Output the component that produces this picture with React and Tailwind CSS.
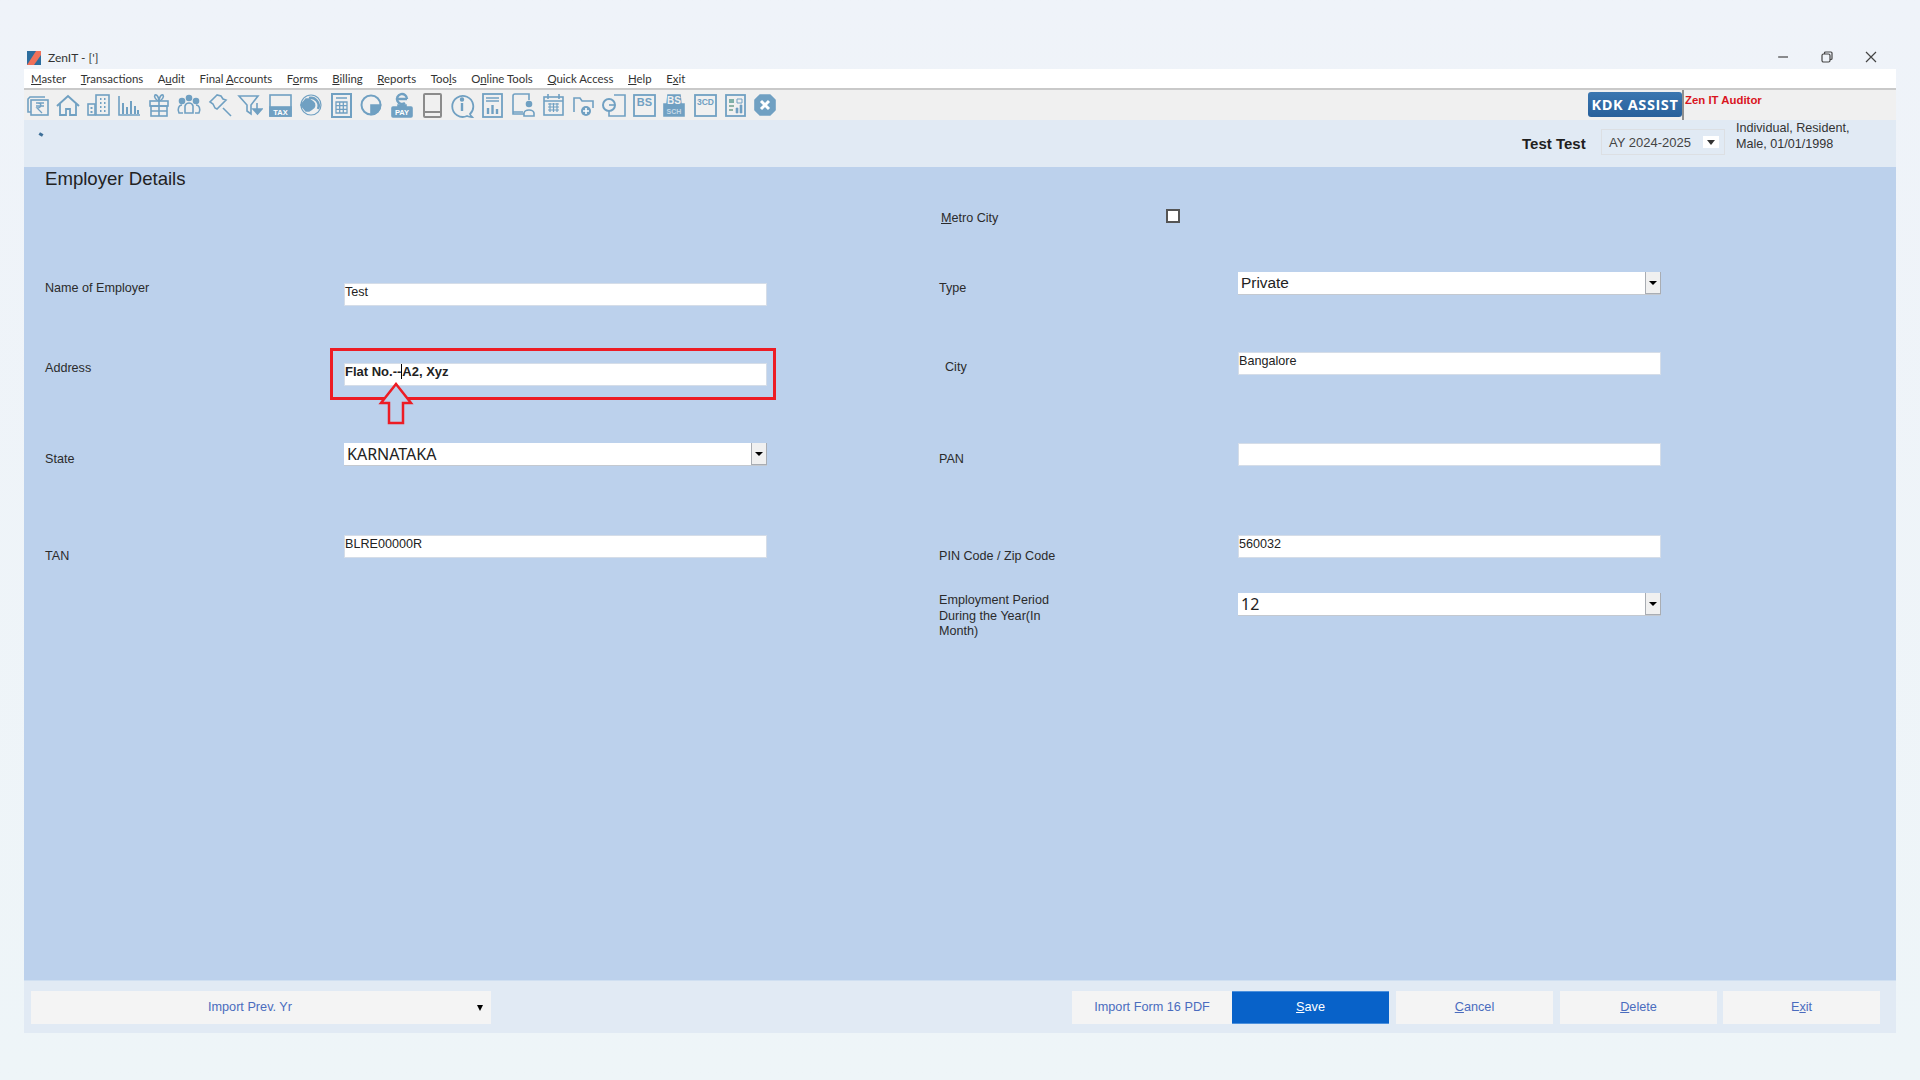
const MENU = [
  ['', 'M', 'aster'],
  ['', 'T', 'ransactions'],
  ['A', 'u', 'dit'],
  ['Final ', 'A', 'ccounts'],
  ['F', 'o', 'rms'],
  ['', 'B', 'illing'],
  ['', 'R', 'eports'],
  ['Too', 'l', 's'],
  ['O', 'n', 'line Tools'],
  ['', 'Q', 'uick Access'],
  ['', 'H', 'elp'],
  ['E', 'x', 'it'],
];

const Svg = ({ children, className = 'text-[#70a0c2]' }) => (
  <svg viewBox="0 0 26 26" width="26" height="26" fill="none" stroke="currentColor" strokeWidth="1.6" className={`shrink-0 ${className}`}>
    {children}
  </svg>
);

const Tiny = ({ x, y, size = 7, children, fill = '#fff' }) => (
  <text x={x} y={y} fontSize={size} fontWeight="700" textAnchor="middle" fill={fill} stroke="none" fontFamily="Liberation Sans, sans-serif">{children}</text>
);

// toolbar icons, left to right
const ICONS = [
  <Svg key="a"><path d="M20 5H5l-2 2v13h3" /><rect x="6" y="8" width="17" height="15" /><path d="M11 11h8M11 14h8M13 11c4 0 4 5-1 5l5 5" strokeWidth="1.3" /></Svg>,
  <Svg key="b"><path d="M2 14 13 4l11 10" strokeWidth="2" /><path d="M5 12v11h6v-6h4v6h6V12" strokeWidth="1.8" /></Svg>,
  <Svg key="c"><rect x="2" y="12" width="7" height="11" /><rect x="10" y="3" width="13" height="20" /><path d="M14 7h1.5M18 7h1.5M14 11h1.5M18 11h1.5M14 15h1.5M18 15h1.5M14 19h1.5M18 19h1.5M4.500 16h2M4.500 20h2" strokeWidth="2" /></Svg>,
  <Svg key="d"><path d="M3 4v19h21" /><path d="M7 11v11M11 15v7M15 9v13M19 14v8M22 18v4" strokeWidth="2" /></Svg>,
  <Svg key="e"><rect x="4" y="9" width="18" height="5" /><rect x="5" y="14" width="16" height="10" /><path d="M13 9v15M5 19h16" /><path d="M13 9C9 8 8 4 9 3c2-1 4 3 4 6 0-3 2-7 4-6 1 1 0 5-4 6Z" /></Svg>,
  <Svg key="f"><circle cx="13" cy="6" r="2.500" fill="currentColor" /><circle cx="6" cy="9" r="2.500" fill="currentColor" /><circle cx="20" cy="9" r="2.500" fill="currentColor" /><path d="M9 21v-7c1-4 7-4 8 0v7Z" /><path d="M7 21H3c-2-4 0-8 3-8M19 21h4c2-4 0-8-3-8" /></Svg>,
  <Svg key="g"><path d="m10 3-7 7 3 2 2 4 2 1 9-9-3-1-2-3Z" /><path d="m16 16 8 8" /></Svg>,
  <Svg key="h"><path d="M2 4h19l-7 9v9l-4-3v-6Z" /><path d="M20 11v7M16 17h9l-4.500 5Z" fill="currentColor" /></Svg>,
  <Svg key="i"><rect x="3" y="3" width="21" height="21" /><rect x="3" y="15" width="21" height="9" fill="currentColor" /><Tiny x="13.500" y="22.500" size="7.500">TAX</Tiny></Svg>,
  <Svg key="j"><circle cx="13" cy="13" r="10" strokeWidth="1.2" /><path d="M3 13l5-6h3l4 3a4 4 0 0 1-1 7l-3 2H8Z" fill="currentColor" /><path d="M11 6a8 8 0 0 1 9 11" strokeWidth="2.500" /></Svg>,
  <Svg key="k"><rect x="4" y="2" width="19" height="23" strokeWidth="2" /><path d="M8 6h11M8 10h11v11H8ZM11.700 10v11M15.300 10v11M8 13.700h11M8 17.300h11" strokeWidth="1.300" /></Svg>,
  <Svg key="l"><circle cx="13" cy="13" r="9.500" strokeWidth="2" /><path d="M13 13h9.500a9.500 9.500 0 0 1-9.500 9.500Z" fill="currentColor" /></Svg>,
  <Svg key="m"><path d="M8 7h10M18 7a5 5 0 1 0-2 4" strokeWidth="2.500" /><path d="M9 13h8v2H9Z" fill="currentColor" /><rect x="3" y="15" width="20" height="10" rx="1" fill="currentColor" /><Tiny x="13" y="23" size="7.500">PAY</Tiny></Svg>,
  <Svg key="n" className="text-[#8b8b8b]"><rect x="5" y="2" width="17" height="23" rx="1" strokeWidth="2" /><path d="M5 20h17" strokeWidth="2" /></Svg>,
  <Svg key="o"><path d="M23 25c-1-1-2-2-2-3a10.500 10.500 0 1 0-3 2c2 1 3 1 5 1Z" strokeWidth="1.800" /><path d="M13 11v8" strokeWidth="2.400" /><circle cx="13" cy="7.500" r="1.400" fill="currentColor" /></Svg>,
  <Svg key="p"><rect x="4" y="2" width="19" height="23" strokeWidth="1.800" /><path d="M7 6h13M7 9h13" /><path d="M9 16v6M13.500 13v9M18 17v5" strokeWidth="2.400" /></Svg>,
  <Svg key="q"><path d="M14 2H5a2 2 0 0 0-2 2v18h11" /><path d="M3 20h10M14 2h5v6" /><circle cx="19" cy="12" r="2.500" fill="currentColor" /><path d="M14 24v-3c1-4 9-4 10 0v3Z" /></Svg>,
  <Svg key="r"><rect x="4" y="5" width="19" height="18" /><path d="M4 9h19M8 2v5M19 2v5" /><path d="M8 12h11M8 15h11M8 18h11M10 11v9M13.500 11v9M17 11v9" strokeWidth="1.200" /></Svg>,
  <Svg key="s"><path d="M4 20V6h6l2 3h11v7" /><circle cx="16" cy="19" r="5" fill="currentColor" stroke="none" /><path d="M13 19h6M16 16v6" stroke="#fff" /></Svg>,
  <Svg key="t"><path d="M13 3h11v21H8v-5" /><circle cx="8" cy="13" r="6" strokeWidth="2" /><path d="M8 13h6" /></Svg>,
  <Svg key="u"><rect x="3" y="3" width="21" height="21" strokeWidth="1.800" /><Tiny x="13.500" y="14" size="11" fill="#70a0c2">BS</Tiny></Svg>,
  <Svg key="v"><path d="M7 3h12l1 9h3v12H3V12h3Z" fill="currentColor" /><Tiny x="13" y="12" size="10" fill="#f0f0f0">BS</Tiny><Tiny x="13" y="22" size="7" fill="#c3d8e7">SCH</Tiny></Svg>,
  <Svg key="w"><rect x="3" y="3" width="21" height="21" strokeWidth="1.800" /><Tiny x="13.500" y="12.500" size="8.500" fill="#70a0c2">3CD</Tiny></Svg>,
  <Svg key="x"><rect x="4" y="3" width="19" height="21" strokeWidth="1.800" /><path d="M7 7h5v4H7Z" fill="#7fb0a8" stroke="none" /><path d="M15 7h5v4h-5Z" stroke="currentColor" strokeWidth="1" /><path d="M7 14h5M7 18h4" stroke="#6f9f8c" /><path d="M14 21v-5h2v5ZM18 21v-8h2v8Z" fill="currentColor" strokeWidth="0.600" /></Svg>,
  <Svg key="y"><path d="M8 3h10l5 5v10l-5 5H8l-5-5V8Z" fill="currentColor" stroke="currentColor" strokeLinejoin="round" /><path d="m9 9 8 8M17 9l-8 8" stroke="#fff" strokeWidth="3" /></Svg>,
];

const Input = ({ value, bold }) => (
  <div className={`h-[23px] w-[423px] bg-white border border-[#d5dde8] leading-[16px] text-[#222] ${bold ? 'font-bold text-[13px]' : 'text-[12.600px]'}`}>{value}</div>
);

const Select = ({ value, font = "font-['Noto_Sans',sans-serif] text-[16px]" }) => (
  <div className={`h-[23px] w-[423px] bg-white border-b border-[#c4c9d0] flex items-center justify-between pl-[3px] text-[#222] ${font}`}>
    <span>{value}</span>
    <span className="w-[16px] h-[22px] bg-[#f0f0f0] border-x border-b border-[#a9adb3] flex items-center justify-center">
      <span className="border-x-[4px] border-x-transparent border-t-[4px] border-t-black" />
    </span>
  </div>
);

const Row = ({ label, labelClass, top, children }) => (
  <div className={`grid grid-cols-[299px_423px] h-[23px] items-start ${top}`}>
    <div className={`pt-[1px] text-[12.600px] leading-[15.500px] text-[#2b2b2b] ${labelClass}`}>{label}</div>
    {children}
  </div>
);

const FooterBtn = ({ children, className = 'bg-[#f4f4f4] text-[#4a6cbe]', width = 'w-[157px]' }) => (
  <div className={`${width} h-[33px] pt-[1px] flex items-center justify-center text-[12.700px] ${className}`}>{children}</div>
);

export default function App() {
  return (
    <div className="h-[1080px] w-[1920px] overflow-hidden bg-gradient-to-b from-[#eff3f9] to-[#eef5f8] pt-[45px] pl-[24px] pr-[24px] font-['Liberation_Sans',sans-serif]">
      <div className="h-[988px] flex flex-col">
        {/* title bar */}
        <div className="h-[24px] shrink-0 flex items-center justify-between">
          <div className="flex items-center gap-[7px] pl-[3px] pt-[2px] text-[12px] text-[#333] font-['Lato',sans-serif]">
            <svg viewBox="0 0 14 14" width="14" height="14" className="shrink-0">
              <rect width="14" height="14" fill="#2c6d9e" />
              <path d="M0 14 9 0h5v4L7 14Z" fill="#f0715a" />
            </svg>
            ZenIT - [']
          </div>
          <div className="flex items-center gap-[30px] pr-[18px] text-[#444]">
            <svg viewBox="0 0 14 14" width="14" height="14" stroke="currentColor" fill="none" strokeWidth="1.200"><path d="M2 7h10" /></svg>
            <svg viewBox="0 0 14 14" width="14" height="14" stroke="currentColor" fill="none" strokeWidth="1.200"><rect x="2" y="4" width="8" height="8" rx="1.500" /><path d="M4.500 4V3a1 1 0 0 1 1-1H11a1 1 0 0 1 1 1v5.500a1 1 0 0 1-1 1h-1" /></svg>
            <svg viewBox="0 0 14 14" width="14" height="14" stroke="currentColor" fill="none" strokeWidth="1.200"><path d="m2 2 10 10M12 2 2 12" /></svg>
          </div>
        </div>

        {/* menu */}
        <div className="h-[21px] shrink-0 bg-white border-b-2 border-[#c9c9c9] flex items-center gap-[14.600px] pl-[7px] text-[11.400px] text-[#333] font-['Lato',sans-serif]">
          {MENU.map(([a, u, b]) => (
            <span key={a + u + b} className="whitespace-pre">{a}<u>{u}</u>{b}</span>
          ))}
        </div>

        {/* toolbar */}
        <div className="h-[30px] shrink-0 bg-[#f0f0f0] flex items-center justify-between pl-[1px]">
          <div className="flex items-center gap-[4.300px]">{ICONS}</div>
          <div className="flex h-full w-[308px]">
            <div className="w-[94px] h-[25px] mt-[2px] rounded-[3px] bg-gradient-to-b from-[#3a76b0] to-[#28609b] text-white font-bold text-[14.500px] tracking-[0.6px] flex items-center justify-center font-['Open_Sans',sans-serif]">KDK ASSIST</div>
            <div className="w-[2px] h-full bg-[#8f8f8f] mr-[1px]" />
            <div className="text-[11.400px] font-bold text-[#d9141e] leading-[14px] pt-[3px]">Zen IT Auditor</div>
          </div>
        </div>

        {/* client strip */}
        <div className="h-[47px] shrink-0 bg-[#e1eaf4] flex items-start justify-between pl-[15px]">
          <span className="mt-[13px] w-[4px] h-[3px] bg-[#3d6f98] rotate-[30deg]" />
          <div className="flex items-start w-[374px] shrink-0">
            <div className="mt-[15px] text-[15px] leading-[18px] font-bold text-[#1f1f1f] w-[79px]">Test Test</div>
            <div className="mt-[9px] w-[124px] h-[26px] border border-[#dcdfe3] flex items-center justify-between pl-[7px] pr-[5px] text-[13px] text-[#444]">
              <span className="pt-[1px]">AY 2024-2025</span>
              <span className="w-[16px] h-[12px] bg-white flex items-center justify-center">
                <span className="border-x-[4px] border-x-transparent border-t-[5px] border-t-[#333]" />
              </span>
            </div>
            <div className="ml-[11px] pt-[1px] text-[12.600px] leading-[15.500px] text-[#333]">Individual, Resident,<br />Male, 01/01/1998</div>
          </div>
        </div>

        {/* form */}
        <div className="flex-1 bg-[#bcd1ec] flex pl-[21px]">
          <div className="w-[722px]">
            <div className="h-[116px] pt-[1px] text-[18.600px] leading-[21px] text-[#222]">Employer Details</div>
            <Row label="Name of Employer" labelClass="-mt-[3px]" top="">
              <Input value="Test" />
            </Row>
            <Row label="Address" labelClass="-mt-[3px]" top="mt-[57px]">
              <div className="relative">
                <Input value={<>Flat No.--<span className="border-l border-black" />A2, Xyz</>} bold />
                {/* highlight overlay */}
                <div className="absolute -left-[14px] -top-[15px] w-[446px] h-[52px] border-[3px] border-[#ed1c24]" />
                <svg viewBox="0 0 36 44" width="36" height="44" className="absolute left-[34px] top-[19px]" fill="#bcd1ec" stroke="#ed1c24" strokeWidth="2.500">
                  <path d="M18 2 3 21h8v20h14V21h8Z" />
                </svg>
              </div>
            </Row>
            <Row label="State" labelClass="mt-[8px]" top="mt-[57px]">
              <Select value="KARNATAKA" />
            </Row>
            <Row label="TAN" labelClass="mt-[13px]" top="mt-[69px]">
              <Input value="BLRE00000R" />
            </Row>
          </div>
          <div className="ml-[172px] w-[722px]">
            <div className="h-[105px] pt-[43px] pl-[2px] flex items-start text-[12.600px] leading-[16px] text-[#2b2b2b]">
              <span className="w-[225px]"><u>M</u>etro City</span>
              <span className="w-[14px] h-[14px] bg-white border-2 border-[#555] -mt-[1px]" />
            </div>
            <Row label="Type" labelClass="mt-[8px]" top="">
              <Select value="Private" font="text-[15.400px]" />
            </Row>
            <Row label="City" labelClass="mt-[7px] pl-[6px]" top="mt-[57px]">
              <Input value="Bangalore" />
            </Row>
            <Row label="PAN" labelClass="mt-[8px]" top="mt-[68px]">
              <Input value="" />
            </Row>
            <Row label="PIN Code / Zip Code" labelClass="mt-[13px]" top="mt-[69px]">
              <Input value="560032" />
            </Row>
            <Row label={<>Employment Period<br />During the Year(In<br />Month)</>} labelClass="-mt-[1px]" top="mt-[35px]">
              <Select value="12" />
            </Row>
          </div>
        </div>

        {/* footer */}
        <div className="h-[53px] shrink-0 bg-[#e1eaf4] border-t border-[#cfdff1] flex items-center justify-between pl-[7px] pr-[16px]">
          <div className="w-[460px] h-[33px] pt-[1px] bg-[#f4f4f4] flex items-center text-[12.700px] text-[#4a6cbe]">
            <span className="w-[438px] text-center">Import Prev. Yr</span>
            <span className="ml-[8px] border-x-[3.5px] border-x-transparent border-t-[6px] border-t-black" />
          </div>
          <div className="flex items-center">
            <FooterBtn width="w-[160px]">Import Form 16 PDF</FooterBtn>
            <FooterBtn className="bg-[#0862c9] text-white border-y border-[#4c90dc]"><span><u>S</u>ave</span></FooterBtn>
            <FooterBtn className="ml-[7px] bg-[#f4f4f4] text-[#4a6cbe]"><span><u>C</u>ancel</span></FooterBtn>
            <FooterBtn className="ml-[7px] bg-[#f4f4f4] text-[#4a6cbe]"><span><u>D</u>elete</span></FooterBtn>
            <FooterBtn className="ml-[6px] bg-[#f4f4f4] text-[#4a6cbe]"><span>E<u>x</u>it</span></FooterBtn>
          </div>
        </div>
      </div>
    </div>
  );
}
